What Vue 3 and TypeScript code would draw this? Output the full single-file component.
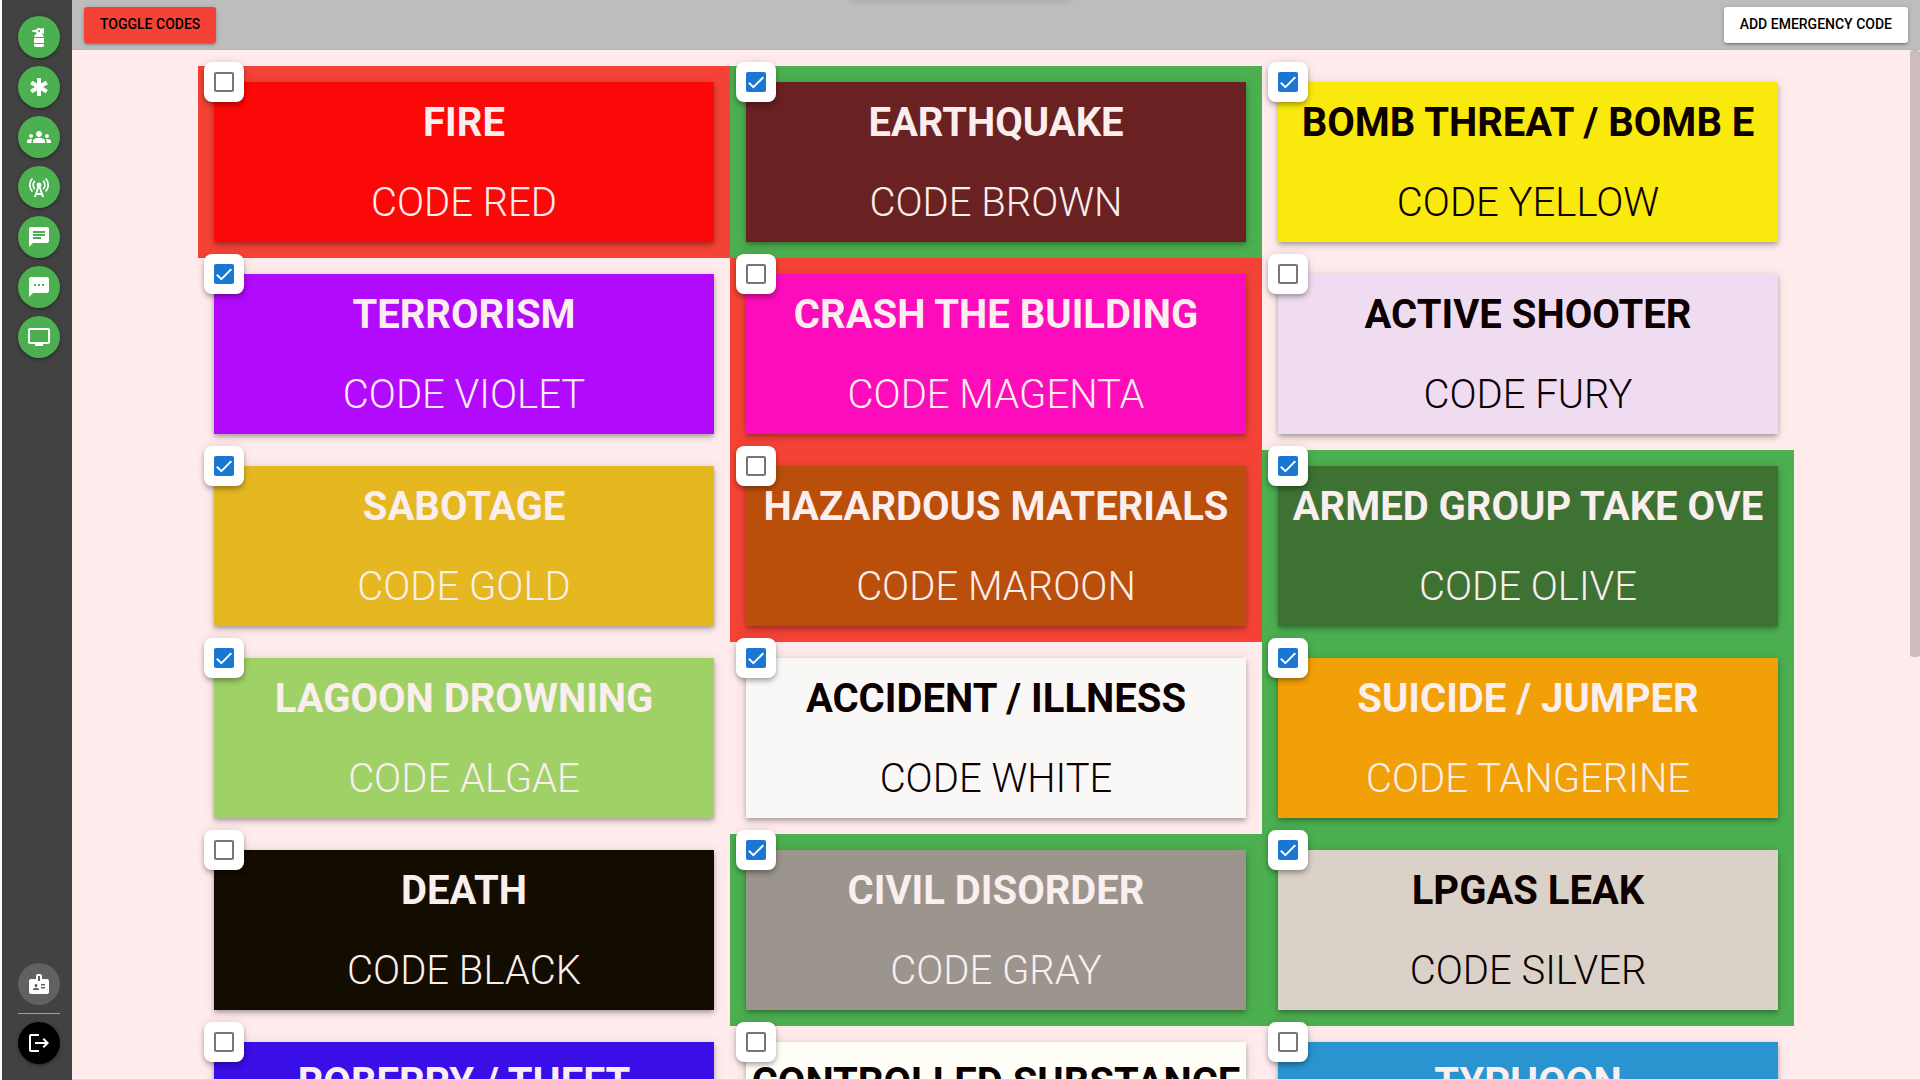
<script setup lang="ts">
import { ref } from 'vue'

type Zone = 'none' | 'red' | 'green'

interface EmergencyCode {
  name: string
  code: string
  color: string
  dark: boolean
  zone: Zone
  enabled: boolean
}

interface NavItem {
  label: string
  path: string
}

const navItems: NavItem[] = [
  {
    label: 'Emergency codes',
    path: 'M7 19h10v1c0 1.1-.9 2-2 2H9c-1.1 0-2-.9-2-2v-1zm0-1h10v-5H7v5zM17 3v6l-3.15-.66c-.01 0-.01.01-.02.02 1.55.62 2.72 1.98 3.07 3.64H7.1c.34-1.66 1.52-3.02 3.07-3.64-.33-.26-.6-.58-.8-.95L5 6.5v-1l4.37-.91C9.87 3.65 10.86 3 12 3c.7 0 1.34.25 1.85.66L17 3zm-4 3c-.03-.59-.45-1-1-1s-1 .45-1 1 .45 1 1 1 1-.45 1-1z',
  },
  {
    label: 'Emergencies',
    path: 'M20.79 9.23l-2-3.46L14 8.54V3h-4v5.54L5.21 5.77l-2 3.46L8 12l-4.79 2.77 2 3.46L10 15.46V21h4v-5.54l4.79 2.77 2-3.46L16 12z',
  },
  {
    label: 'Groups',
    path: 'M12 12.75c1.63 0 3.07.39 4.24.9 1.08.48 1.76 1.56 1.76 2.73V18H6v-1.61c0-1.18.68-2.26 1.76-2.73 1.17-.52 2.61-.91 4.24-.91zM4 13c1.1 0 2-.9 2-2s-.9-2-2-2-2 .9-2 2 .9 2 2 2zm1.13 1.1c-.37-.06-.74-.1-1.13-.1-.99 0-1.93.21-2.78.58C.48 14.9 0 15.62 0 16.43V18h4.5v-1.61c0-.83.23-1.61.63-2.29zM20 13c1.1 0 2-.9 2-2s-.9-2-2-2-2 .9-2 2 .9 2 2 2zm4 3.43c0-.81-.48-1.53-1.22-1.85-.85-.37-1.79-.58-2.78-.58-.39 0-.76.04-1.13.1.4.68.63 1.46.63 2.29V18H24v-1.57zM12 6c1.66 0 3 1.34 3 3s-1.34 3-3 3-3-1.34-3-3 1.34-3 3-3z',
  },
  {
    label: 'Broadcast',
    path: 'M7.3 14.7l1.2-1.2c-1-1-1.5-2.3-1.5-3.5 0-1.3.5-2.6 1.5-3.5L7.3 5.3c-1.3 1.3-2 3-2 4.7s.7 3.4 2 4.7zM19.1 2.9l-1.2 1.2c1.6 1.6 2.4 3.8 2.4 5.9 0 2.1-.8 4.3-2.4 5.9l1.2 1.2c2-2 2.9-4.5 2.9-7.1 0-2.6-1-5.1-2.9-7.1zM6.1 4.1L4.9 2.9C3 4.9 2 7.4 2 10c0 2.6 1 5.1 2.9 7.1l1.2-1.2c-1.6-1.6-2.4-3.8-2.4-5.9 0-2.1.8-4.3 2.4-5.9zM16.7 14.7c1.3-1.3 2-3 2-4.7-.1-1.7-.7-3.4-2-4.7l-1.2 1.2c1 1 1.5 2.3 1.5 3.5 0 1.3-.5 2.6-1.5 3.5l1.2 1.2zM14.5 10c0-1.38-1.12-2.5-2.5-2.5S9.5 8.62 9.5 10c0 .76.34 1.42.87 1.88L7 22h2l.67-2h4.67l.66 2h2l-3.37-10.12c.53-.46.87-1.12.87-1.88zm-4.17 8L12 13l1.67 5h-3.34z',
  },
  {
    label: 'Messages',
    path: 'M20 2H4c-1.1 0-1.99.9-1.99 2L2 22l4-4h14c1.1 0 2-.9 2-2V4c0-1.1-.9-2-2-2zM6 9h12v2H6V9zm8 5H6v-2h8v2zm4-6H6V6h12v2z',
  },
  {
    label: 'SMS',
    path: 'M20 2H4c-1.1 0-1.99.9-1.99 2L2 22l4-4h14c1.1 0 2-.9 2-2V4c0-1.1-.9-2-2-2zM9 11H7V9h2v2zm4 0h-2V9h2v2zm4 0h-2V9h2v2z',
  },
  {
    label: 'Displays',
    path: 'M21 3H3c-1.1 0-2 .9-2 2v12c0 1.1.9 2 2 2h5v2h8v-2h5c1.1 0 1.99-.9 1.99-2L23 5c0-1.1-.9-2-2-2zm0 14H3V5h18v12z',
  },
]

const codes = ref<EmergencyCode[]>([
  { name: 'FIRE', code: 'CODE RED', color: '#fd0808', dark: false, zone: 'red', enabled: false },
  { name: 'EARTHQUAKE', code: 'CODE BROWN', color: '#692122', dark: false, zone: 'green', enabled: true },
  { name: 'BOMB THREAT / BOMB E', code: 'CODE YELLOW', color: '#f9e90c', dark: true, zone: 'none', enabled: true },
  { name: 'TERRORISM', code: 'CODE VIOLET', color: '#b10afc', dark: false, zone: 'none', enabled: true },
  { name: 'CRASH THE BUILDING', code: 'CODE MAGENTA', color: '#fc0cba', dark: false, zone: 'red', enabled: false },
  { name: 'ACTIVE SHOOTER', code: 'CODE FURY', color: '#f0dcf1', dark: true, zone: 'none', enabled: false },
  { name: 'SABOTAGE', code: 'CODE GOLD', color: '#e5b721', dark: false, zone: 'none', enabled: true },
  { name: 'HAZARDOUS MATERIALS', code: 'CODE MAROON', color: '#b94f0a', dark: false, zone: 'red', enabled: false },
  { name: 'ARMED GROUP TAKE OVE', code: 'CODE OLIVE', color: '#3d7233', dark: false, zone: 'green', enabled: true },
  { name: 'LAGOON DROWNING', code: 'CODE ALGAE', color: '#a0d167', dark: false, zone: 'none', enabled: true },
  { name: 'ACCIDENT / ILLNESS', code: 'CODE WHITE', color: '#f9f8f6', dark: true, zone: 'none', enabled: true },
  { name: 'SUICIDE / JUMPER', code: 'CODE TANGERINE', color: '#f2a007', dark: false, zone: 'green', enabled: true },
  { name: 'DEATH', code: 'CODE BLACK', color: '#120c01', dark: false, zone: 'none', enabled: false },
  { name: 'CIVIL DISORDER', code: 'CODE GRAY', color: '#9b958d', dark: false, zone: 'green', enabled: true },
  { name: 'LPGAS LEAK', code: 'CODE SILVER', color: '#dad2c8', dark: true, zone: 'green', enabled: true },
  { name: 'ROBERRY / THEFT', code: 'CODE BLUE', color: '#3a0ee6', dark: false, zone: 'none', enabled: false },
  { name: 'CONTROLLED SUBSTANCE', code: 'CODE IVORY', color: '#fffff8', dark: true, zone: 'none', enabled: false },
  { name: 'TYPHOON', code: 'CODE AQUA', color: '#2994d0', dark: false, zone: 'none', enabled: false },
])
</script>

<template>
  <div class="app">
    <nav class="sidebar" aria-label="Main">
      <button v-for="item in navItems" :key="item.label" type="button" class="round" :aria-label="item.label">
        <svg viewBox="0 0 24 24" aria-hidden="true"><path :d="item.path" /></svg>
      </button>
      <span class="spacer"></span>
      <button type="button" class="round profile" aria-label="Profile">
        <svg viewBox="0 0 24 24" aria-hidden="true">
          <path
            d="M20 7h-5V4c0-1.1-.9-2-2-2h-2c-1.1 0-2 .9-2 2v3H4c-1.1 0-2 .9-2 2v11c0 1.1.9 2 2 2h16c1.1 0 2-.9 2-2V9c0-1.1-.9-2-2-2zM9 12c.83 0 1.5.67 1.5 1.5S9.83 15 9 15s-1.5-.67-1.5-1.5S8.17 12 9 12zm3 6H6v-.75c0-1 2-1.5 3-1.5s3 .5 3 1.5V18zm1-9h-2V4h2v5zm5 7.5h-4V15h4v1.5zm0-3h-4V12h4v1.5z"
          />
        </svg>
      </button>
      <hr class="divider" />
      <button type="button" class="round logout" aria-label="Log out">
        <svg viewBox="0 0 24 24" aria-hidden="true">
          <path
            d="M17 7l-1.41 1.41L18.17 11H8v2h10.17l-2.58 2.58L17 17l5-5zM4 5h8V3H4c-1.1 0-2 .9-2 2v14c0 1.1.9 2 2 2h8v-2H4V5z"
          />
        </svg>
      </button>
    </nav>

    <div class="main">
      <header class="toolbar">
        <button type="button" class="btn btn-red">TOGGLE CODES</button>
        <button type="button" class="btn btn-white">ADD EMERGENCY CODE</button>
      </header>

      <main class="scroll">
        <div class="grid">
          <section v-for="item in codes" :key="item.name" class="cell" :class="'zone-' + item.zone">
            <div class="card" :class="{ dark: item.dark }" :style="{ backgroundColor: item.color }">
              <h2 class="name">{{ item.name }}</h2>
              <p class="code">{{ item.code }}</p>
            </div>
            <label class="check">
              <input v-model="item.enabled" type="checkbox" :aria-label="item.name" />
              <svg v-if="item.enabled" viewBox="0 0 24 24" aria-hidden="true">
                <path d="M3.5 12.9 8.8 18.2 20.8 6.2" />
              </svg>
            </label>
          </section>
        </div>
      </main>
      <span class="thumb" aria-hidden="true"></span>
    </div>
    <span class="notch" aria-hidden="true"></span>
  </div>
</template>

<style>
body {
  margin: 0;
}
</style>

<style scoped>
.app {
  position: relative;
  display: flex;
  box-sizing: border-box;
  height: 100vh;
  overflow: hidden;
  border-left: 2px solid #fff;
  background: #ffebec;
  font-family: Roboto, 'Liberation Sans', sans-serif;
}

.sidebar {
  display: flex;
  flex: none;
  flex-direction: column;
  gap: 8px;
  box-sizing: border-box;
  width: 70px;
  padding: 16px 12px 16px 16px;
  background: #424242;
}

.spacer {
  flex: 1;
}

.round {
  display: flex;
  align-items: center;
  justify-content: center;
  flex: none;
  width: 42px;
  height: 42px;
  padding: 0;
  border: 0;
  border-radius: 50%;
  background: #4caf50;
  box-shadow: 0 1px 5px rgba(0, 0, 0, 0.2), 0 2px 2px rgba(0, 0, 0, 0.14), 0 3px 1px -2px rgba(0, 0, 0, 0.12);
  cursor: pointer;
}

.round svg {
  width: 24px;
  height: 24px;
  fill: #fff;
}

.profile {
  background: #616161;
  box-shadow: none;
}

.logout {
  background: #000;
}

.divider {
  flex: none;
  width: 42px;
  height: 1px;
  margin: 0;
  border: 0;
  background: #9e9e9e;
}

.main {
  position: relative;
  display: flex;
  flex: 1;
  flex-direction: column;
  min-width: 0;
}

.toolbar {
  display: flex;
  align-items: center;
  justify-content: space-between;
  flex: none;
  box-sizing: border-box;
  height: 50px;
  padding: 0 12px;
  border-bottom: 1px solid #b8b6b6;
  background: #bdbdbd;
}

.btn {
  height: 36px;
  padding: 0 16px 2px;
  border: 0;
  border-radius: 3px;
  color: #000;
  font-family: inherit;
  font-size: 14px;
  font-weight: 500;
  line-height: 24px;
  box-shadow: 0 1px 5px rgba(0, 0, 0, 0.2), 0 2px 2px rgba(0, 0, 0, 0.14), 0 3px 1px -2px rgba(0, 0, 0, 0.12);
  cursor: pointer;
}

.btn-red {
  background: #f44336;
}

.btn-white {
  background: #fff;
}

.scroll {
  flex: 1;
  min-height: 0;
  overflow-y: auto;
  scrollbar-width: none;
  border-bottom: 1px solid #dcdcdc;
}

.grid {
  display: grid;
  grid-template-columns: repeat(3, minmax(0, 1fr));
  max-width: 1596px;
  margin: 0 auto;
  padding: 16px 0;
}

.cell {
  position: relative;
  padding: 16px;
}

.zone-red {
  background: #f44336;
}

.zone-green {
  background: #4caf50;
}

.card {
  box-sizing: border-box;
  height: 160px;
  padding-top: 1px;
  overflow: hidden;
  color: #faeeee;
  text-align: center;
  white-space: nowrap;
  box-shadow: 0 2px 4px -1px rgba(0, 0, 0, 0.2), 0 4px 5px rgba(0, 0, 0, 0.14), 0 1px 10px rgba(0, 0, 0, 0.12);
}

.card.dark {
  color: #0c0000;
}

.name,
.code {
  margin: 0;
  font-size: 40px;
  line-height: 80px;
}

.name {
  font-weight: 700;
}

.code {
  font-weight: 300;
}

/* Tick box badge sits over the card's top-left corner */
.check {
  position: absolute;
  top: -4px;
  left: 6px;
  z-index: 1;
  display: grid;
  place-items: center;
  width: 40px;
  height: 40px;
  border-radius: 8px;
  background: #fff;
  box-shadow: 0 2px 4px -1px rgba(0, 0, 0, 0.2), 0 4px 5px rgba(0, 0, 0, 0.14), 0 1px 10px rgba(0, 0, 0, 0.12);
  cursor: pointer;
}

.check input {
  grid-area: 1 / 1;
  box-sizing: border-box;
  width: 20px;
  height: 20px;
  margin: 0;
  border: 2px solid #757575;
  border-radius: 2px;
  appearance: none;
}

.check input:checked {
  border-color: #1976d2;
  background: #1976d2;
}

.check svg {
  grid-area: 1 / 1;
  width: 20px;
  height: 20px;
  fill: none;
  stroke: #fff;
  stroke-width: 2.4;
  pointer-events: none;
}

.thumb {
  position: absolute;
  top: 50px;
  right: 0;
  width: 10px;
  height: 56.2%;
  border-radius: 3px;
  background: rgba(0, 0, 0, 0.2);
}

/* Drawer tucked above the window edge; only its shadow shows */
.notch {
  position: absolute;
  top: -12px;
  left: 50%;
  width: 220px;
  height: 10px;
  transform: translateX(-50%);
  box-shadow: 0 1px 8px rgba(0, 0, 0, 0.2);
}
</style>
